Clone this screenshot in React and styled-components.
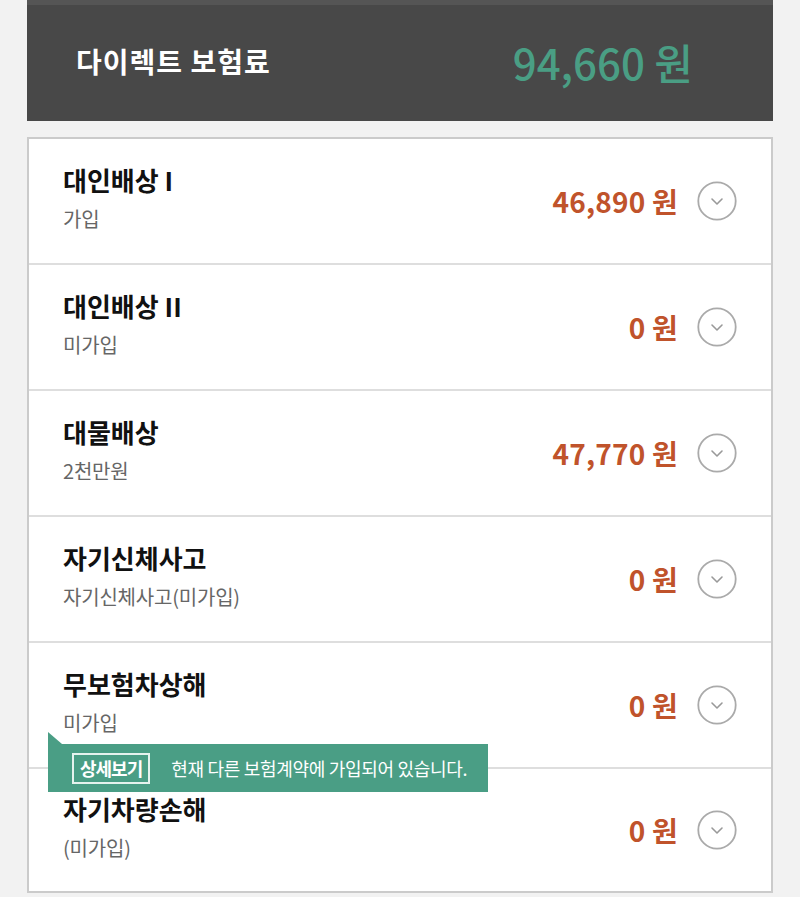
import React from "react";
import styled, { createGlobalStyle } from "styled-components";

const GlobalStyle = createGlobalStyle`
  body {
    margin: 0;
    background: #f2f2f2;
    font-family: "Noto Sans CJK KR", "Noto Sans", sans-serif;
  }
`;

const Page = styled.div`
  padding: 0 27px;
`;

const Header = styled.div`
  height: 121px;
  box-sizing: border-box;
  background: #484848;
  border-top: 5px solid #555;
  display: flex;
  align-items: center;
  justify-content: space-between;
  padding: 0 80px 4px 49px;
`;

const HeaderTitle = styled.div`
  color: #fff;
  font-size: 28px;
  font-weight: 700;
  letter-spacing: 1px;
`;

const HeaderAmount = styled.div`
  color: #4a9e84;
  font-size: 42px;
  font-weight: 500;
  letter-spacing: 0;
`;

const List = styled.div`
  margin-top: 16px;
  background: #fff;
  border: 2px solid #cbcbcb;
`;

const Row = styled.div`
  position: relative;
  height: 126px;
  box-sizing: border-box;
  border-bottom: 2px solid #dedede;
  display: flex;
  align-items: center;
  justify-content: space-between;
  padding: 0 34px;

  &:last-child {
    border-bottom: none;
    height: 122px;
  }
`;

const Info = styled.div`
  display: flex;
  flex-direction: column;
  margin-top: -5px;
`;

const Title = styled.div`
  color: #111;
  font-size: 26px;
  font-weight: 700;
  line-height: 32px;
  letter-spacing: 0;
`;

const Sub = styled.div`
  color: #666;
  font-size: 20px;
  line-height: 28px;
  margin-top: 9px;
  letter-spacing: -0.2px;
`;

const Right = styled.div`
  display: flex;
  align-items: center;
  gap: 19px;
`;

const Amount = styled.div`
  color: #c0532b;
  font-size: 28px;
  font-weight: 700;
  letter-spacing: 0.2px;
`;

const Tip = styled.div`
  position: absolute;
  left: 19px;
  top: 101px;
  width: 440px;
  height: 48px;
  box-sizing: border-box;
  background: #4a9e85;
  display: flex;
  align-items: center;
  padding-left: 24px;
  gap: 21px;
  z-index: 2;

  &::before {
    content: "";
    position: absolute;
    left: 0;
    top: -12px;
    border-left: 14px solid #4a9e85;
    border-top: 12px solid transparent;
  }
`;

const TipButton = styled.div`
  border: 2px solid #e6f3ee;
  color: #fff;
  font-size: 18px;
  font-weight: 700;
  letter-spacing: -1px;
  padding: 0 6px;
  height: 31px;
  line-height: 27px;
  box-sizing: border-box;
`;

const TipText = styled.div`
  color: #fff;
  font-size: 18px;
  letter-spacing: -0.3px;
`;

function Chevron() {
  return (
    <svg width="40" height="40" viewBox="0 0 40 40">
      <circle cx="20" cy="20" r="18.7" fill="none" stroke="#aaa" strokeWidth="1.8" />
      <path d="M15 18 L20 23 L25 18" fill="none" stroke="#999" strokeWidth="1.6" strokeLinecap="round" strokeLinejoin="round" />
    </svg>
  );
}

const items = [
  { title: "대인배상 I", sub: "가입", amount: "46,890 원" },
  { title: "대인배상 II", sub: "미가입", amount: "0 원" },
  { title: "대물배상", sub: "2천만원", amount: "47,770 원" },
  { title: "자기신체사고", sub: "자기신체사고(미가입)", amount: "0 원" },
  { title: "무보험차상해", sub: "미가입", amount: "0 원", tip: true },
  { title: "자기차량손해", sub: "(미가입)", amount: "0 원" },
];

export default function App() {
  return (
    <Page>
      <GlobalStyle />
      <Header>
        <HeaderTitle>다이렉트 보험료</HeaderTitle>
        <HeaderAmount>94,660 원</HeaderAmount>
      </Header>
      <List>
        {items.map((item) => (
          <Row key={item.title}>
            <Info>
              <Title>{item.title}</Title>
              <Sub>{item.sub}</Sub>
            </Info>
            <Right>
              <Amount>{item.amount}</Amount>
              <Chevron />
            </Right>
            {item.tip && (
              <Tip>
                <TipButton>상세보기</TipButton>
                <TipText>현재 다른 보험계약에 가입되어 있습니다.</TipText>
              </Tip>
            )}
          </Row>
        ))}
      </List>
    </Page>
  );
}
